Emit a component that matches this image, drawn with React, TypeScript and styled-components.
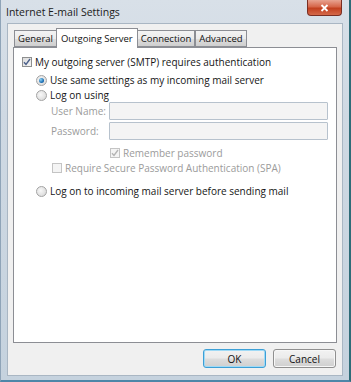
import React from "react";
import styled, { createGlobalStyle } from "styled-components";

const Global = createGlobalStyle`
  html, body { margin: 0; padding: 0; background: #ffffff; }
  body { font-family: "Open Sans", "Noto Sans", sans-serif; }
  #root { width: 351px; height: 382px; }
`;

const Window = styled.div`
  width: 351px;
  height: 382px;
  box-sizing: border-box;
  display: flex;
  flex-direction: column;
  background: linear-gradient(180deg, #d8e0e8 0%, #cfd9e3 30%, #c5d2de 100%);
  border-right: 2px solid #2e6c78;
  border-bottom: 2px solid #4e86a8;
  border-left: 1px solid #8fa4b8;
`;

const TitleBar = styled.div`
  height: 23px;
  display: flex;
  align-items: flex-start;
  justify-content: space-between;
  padding-left: 5px;
  padding-right: 7px;
`;

const Title = styled.div`
  font-size: 10.5px;
  color: #1b1b1b;
  line-height: 12px;
  margin-top: 6px;
`;

const CloseButton = styled.div`
  width: 35px;
  height: 16px;
  box-sizing: border-box;
  border: 1px solid #7a2e22;
  border-top: none;
  border-radius: 0 0 4px 4px;
  background: linear-gradient(180deg, #e8a391 0%, #d6664a 45%, #c2401f 55%, #d4694a 100%);
  display: flex;
  align-items: center;
  justify-content: center;
`;

const Client = styled.div`
  flex: 1;
  margin: 0 6px 4px 6px;
  background: #f0f0f0;
  border: 1px solid #a9b6c3;
  display: flex;
  flex-direction: column;
  padding: 4px 6px 0 5px;
`;

const TabStrip = styled.div`
  display: flex;
  align-items: flex-end;
  height: 19px;
  padding-left: 1px;
  position: relative;
  z-index: 1;
`;

const Tab = styled.div<{ $active?: boolean }>`
  box-sizing: border-box;
  height: ${(p) => (p.$active ? "20px" : "17px")};
  margin-bottom: ${(p) => (p.$active ? "-1px" : "0")};
  padding: 0 ${(p) => (p.$active ? "4px" : "3px")};
  margin-left: ${(p) => (p.$active ? "-1px" : "0")};
  margin-right: ${(p) => (p.$active ? "-1px" : "0")};
  border: 1px solid #8c8e94;
  border-bottom: ${(p) => (p.$active ? "none" : "1px solid #8c8e94")};
  background: ${(p) =>
    p.$active ? "#ffffff" : "linear-gradient(180deg, #f3f3f3 0%, #ebebeb 50%, #dddddd 51%, #cfcfcf 100%)"};
  font-size: 9.5px;
  color: #111;
  display: flex;
  align-items: center;
  line-height: 12px;
  position: relative;
  z-index: ${(p) => (p.$active ? 2 : 1)};
  & + & { border-left: ${(p) => (p.$active ? "1px solid #8c8e94" : "none")}; }
`;

const Panel = styled.div`
  box-sizing: border-box;
  height: 296px;
  width: 324px;
  background: #ffffff;
  border: 1px solid #8c8e94;
  display: flex;
  flex-direction: column;
  padding: 8px 0 0 8px;
`;

const Row = styled.div<{ $indent?: number; $gap?: number; $h?: number }>`
  display: flex;
  align-items: center;
  height: ${(p) => p.$h ?? 12}px;
  margin-left: ${(p) => p.$indent ?? 0}px;
  margin-top: ${(p) => p.$gap ?? 0}px;
`;

const Label = styled.span<{ $disabled?: boolean }>`
  font-size: 10px;
  line-height: 12px;
  color: ${(p) => (p.$disabled ? "#9b9b9b" : "#151515")};
  white-space: nowrap;
`;

const FieldLabel = styled(Label)`
  width: 58px;
`;

const Input = styled.div`
  box-sizing: border-box;
  width: 219px;
  height: 18px;
  border: 1px solid #b7c2cd;
  background: #f4f4f4;
  border-radius: 1px;
`;

const Box = styled.span<{ $disabled?: boolean }>`
  box-sizing: border-box;
  width: 10px;
  height: 10px;
  border: 1px solid ${(p) => (p.$disabled ? "#c4c4c4" : "#8e8f8f")};
  background: ${(p) =>
    p.$disabled ? "#f4f4f4" : "linear-gradient(135deg, #dcdcdc 0%, #f5f5f5 100%)"};
  margin-right: 3px;
  display: flex;
  align-items: center;
  justify-content: center;
  flex: none;
`;

const Radio = styled.span<{ $checked?: boolean }>`
  box-sizing: border-box;
  width: 11px;
  height: 11px;
  border-radius: 50%;
  border: 1px solid #a3a3a3;
  background: radial-gradient(circle at 40% 40%, #f8f8f8 0%, #dedede 70%, #cfcfcf 100%);
  margin-right: 3px;
  display: flex;
  align-items: center;
  justify-content: center;
  flex: none;
  &::after {
    content: "";
    display: ${(p) => (p.$checked ? "block" : "none")};
    width: 5px;
    height: 5px;
    border-radius: 50%;
    background: radial-gradient(circle at 35% 35%, #8fd4f5 0%, #1b6fb5 60%, #0d4c8a 100%);
  }
`;

const Footer = styled.div`
  flex: 1;
  display: flex;
  justify-content: flex-end;
  align-items: flex-start;
  padding-top: 6px;
  gap: 7px;
`;

const Button = styled.div<{ $default?: boolean }>`
  box-sizing: border-box;
  width: 63px;
  height: 19px;
  border-radius: 3px;
  border: 1px solid ${(p) => (p.$default ? "#3c9fd6" : "#8f8f8f")};
  box-shadow: ${(p) => (p.$default ? "inset 0 0 0 1px #9fdaf6" : "inset 0 0 0 1px #f7f7f7")};
  background: linear-gradient(180deg, #f2f2f2 0%, #ebebeb 48%, #dddddd 52%, #cfcfcf 100%);
  font-size: 10px;
  color: #111;
  display: flex;
  align-items: center;
  justify-content: center;
`;

const Check = ({ color = "#4a5f8a" }: { color?: string }) => (
  <svg width="8" height="8" viewBox="0 0 8 8">
    <path d="M1 4.2 L3 6.5 L7 1" fill="none" stroke={color} strokeWidth="1.4" />
  </svg>
);

export default function App() {
  return (
    <>
      <Global />
      <Window>
        <TitleBar>
          <Title>Internet E-mail Settings</Title>
          <CloseButton>
            <svg width="9" height="8" viewBox="0 0 9 8">
              <path d="M1.5 1 L7.5 7 M7.5 1 L1.5 7" stroke="#ffffff" strokeWidth="1.8" />
            </svg>
          </CloseButton>
        </TitleBar>
        <Client>
          <TabStrip>
            <Tab>General</Tab>
            <Tab $active>Outgoing Server</Tab>
            <Tab>Connection</Tab>
            <Tab>Advanced</Tab>
          </TabStrip>
          <Panel>
            <Row>
              <Box>
                <Check />
              </Box>
              <Label>My outgoing server (SMTP) requires authentication</Label>
            </Row>
            <Row $indent={14} $gap={6}>
              <Radio $checked />
              <Label>Use same settings as my incoming mail server</Label>
            </Row>
            <Row $indent={14} $gap={3}>
              <Radio />
              <Label>Log on using</Label>
            </Row>
            <Row $indent={29} $gap={1} $h={18}>
              <FieldLabel $disabled>User Name:</FieldLabel>
              <Input />
            </Row>
            <Row $indent={29} $gap={2} $h={18}>
              <FieldLabel $disabled>Password:</FieldLabel>
              <Input />
            </Row>
            <Row $indent={88} $gap={7}>
              <Box $disabled>
                <Check color="#b4b4b4" />
              </Box>
              <Label $disabled>Remember password</Label>
            </Row>
            <Row $indent={30} $gap={3}>
              <Box $disabled />
              <Label $disabled>Require Secure Password Authentication (SPA)</Label>
            </Row>
            <Row $indent={14} $gap={11}>
              <Radio />
              <Label>Log on to incoming mail server before sending mail</Label>
            </Row>
          </Panel>
          <Footer>
            <Button $default>OK</Button>
            <Button>Cancel</Button>
          </Footer>
        </Client>
      </Window>
    </>
  );
}
